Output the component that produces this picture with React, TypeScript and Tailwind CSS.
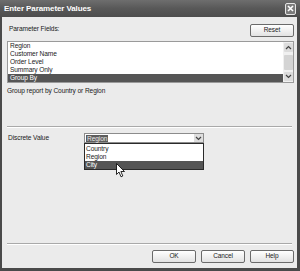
import React from "react";

const Chevron = ({ up = false }: { up?: boolean }) => (
  <svg width="7" height="5" viewBox="0 0 7 5">
    <polyline
      points={up ? "1,4 3.5,1.5 6,4" : "1,1 3.5,3.5 6,1"}
      fill="none"
      stroke="#444"
      strokeWidth="1.2"
    />
  </svg>
);

const Btn = ({ label }: { label: string }) => (
  <div className="w-[44px] h-[13px] border border-[#6a6a6a] rounded-[2px] bg-gradient-to-b from-[#ffffff] to-[#e2e2e2] flex items-center justify-center text-[6.5px] text-[#222] leading-none">
    {label}
  </div>
);

export default function App() {
  const items = ["Region", "Customer Name", "Order Level", "Summary Only", "Group By"];
  return (
    <div className="relative w-[300px] h-[271px] flex flex-col bg-[#4a4a4a] font-['Liberation_Sans',Arial,sans-serif] tracking-[-0.1px] text-[#1a1a1a]">
      {/* Title bar */}
      <div className="h-[17px] flex items-center pl-[4px] pr-[4px] bg-gradient-to-b from-[#6e6e6e] via-[#585858] to-[#4d4d4d]">
        <span className="text-white font-bold text-[8px] leading-none">Enter Parameter Values</span>
        <div className="ml-auto w-[11px] h-[12px] border border-[#e6e6e6] rounded-[2px] bg-[#7c7c7c] flex items-center justify-center">
          <svg width="7" height="7" viewBox="0 0 7 7">
            <path d="M1 1 L6 6 M6 1 L1 6" stroke="#fff" strokeWidth="1.6" />
          </svg>
        </div>
      </div>

      {/* Body */}
      <div className="flex-1 flex flex-col ml-[2px] mr-[3px] mb-[3px] bg-[#ebebeb] pl-[5px] pr-[3px] pb-[5px] text-[6.6px]">
        <div className="mt-[7px] h-[13px] flex items-start justify-between">
          <span className="pl-[2px] leading-[9px]">Parameter Fields:</span>
          <Btn label="Reset" />
        </div>

        {/* List box */}
        <div className="mt-[4px] h-[42px] border border-[#9a9a9a] bg-white flex">
          <div className="flex-1 flex flex-col">
            {items.map((it) => (
              <div
                key={it}
                className={`h-[8px] leading-[8px] pl-[2px] ${
                  it === "Group By" ? "bg-[#555555] text-white" : ""
                }`}
              >
                {it}
              </div>
            ))}
          </div>
          <div className="w-[10px] bg-[#f0f0f0] flex flex-col items-center py-[1px]">
            <div className="w-[9px] h-[9px] bg-[#dcdcdc] rounded-[1px] flex items-center justify-center">
              <Chevron up />
            </div>
            <div className="mt-[3px] w-[9px] h-[15px] bg-[#d4d4d4] rounded-[1px]" />
            <div className="mt-auto w-[9px] h-[9px] bg-[#dcdcdc] rounded-[1px] flex items-center justify-center">
              <Chevron />
            </div>
          </div>
        </div>

        <div className="mt-[4px] leading-[8px]">Group report by Country or Region</div>

        <div className="mt-[31px] mr-[2px] h-[2px] border-t border-[#a9a9a9] border-b border-b-white" />

        {/* Discrete value row */}
        <div className="mt-[5px] h-[10px] flex items-center">
          <span className="w-[77px] pl-[1px] leading-[10px]">Discrete Value</span>
          <div className="relative w-[120px] h-[10px] border border-[#8c8c8c] bg-white flex items-center">
            <span className="ml-[1px] h-[7px] px-[1px] leading-[7px] bg-[#5c5c5c] text-[#e8e8e8]">Region</span>
            <div className="ml-auto w-[9px] h-[8px] bg-[#dedede] flex items-center justify-center">
              <Chevron />
            </div>
            {/* Dropdown */}
            <div className="absolute left-[-1px] top-[9px] w-[120px] h-[27px] border border-[#2a2a2a] bg-white pt-[1px] flex flex-col">
              <div className="h-[8px] leading-[8px] pl-[1px]">Country</div>
              <div className="h-[8px] leading-[8px] pl-[1px]">Region</div>
              <div className="h-[8px] leading-[8px] pl-[1px] bg-[#555555] text-white">City</div>
            </div>
          </div>
        </div>

        <div className="flex-1" />

        <div className="mr-[2px] h-[2px] border-t border-[#a9a9a9] border-b border-b-white" />

        <div className="mt-[5px] flex justify-end gap-[5px]">
          <Btn label="OK" />
          <Btn label="Cancel" />
          <Btn label="Help" />
        </div>
      </div>

      {/* Mouse cursor */}
      <svg
        className="absolute left-[116px] top-[163px]"
        width="10"
        height="15"
        viewBox="0 0 10 15"
      >
        <path
          d="M0.5 0.5 L0.5 11.5 L3 9 L5 13.8 L6.8 13 L4.9 8.5 L8.5 8.5 Z"
          fill="#fff"
          stroke="#111"
          strokeWidth="0.9"
          strokeLinejoin="round"
        />
      </svg>
    </div>
  );
}
